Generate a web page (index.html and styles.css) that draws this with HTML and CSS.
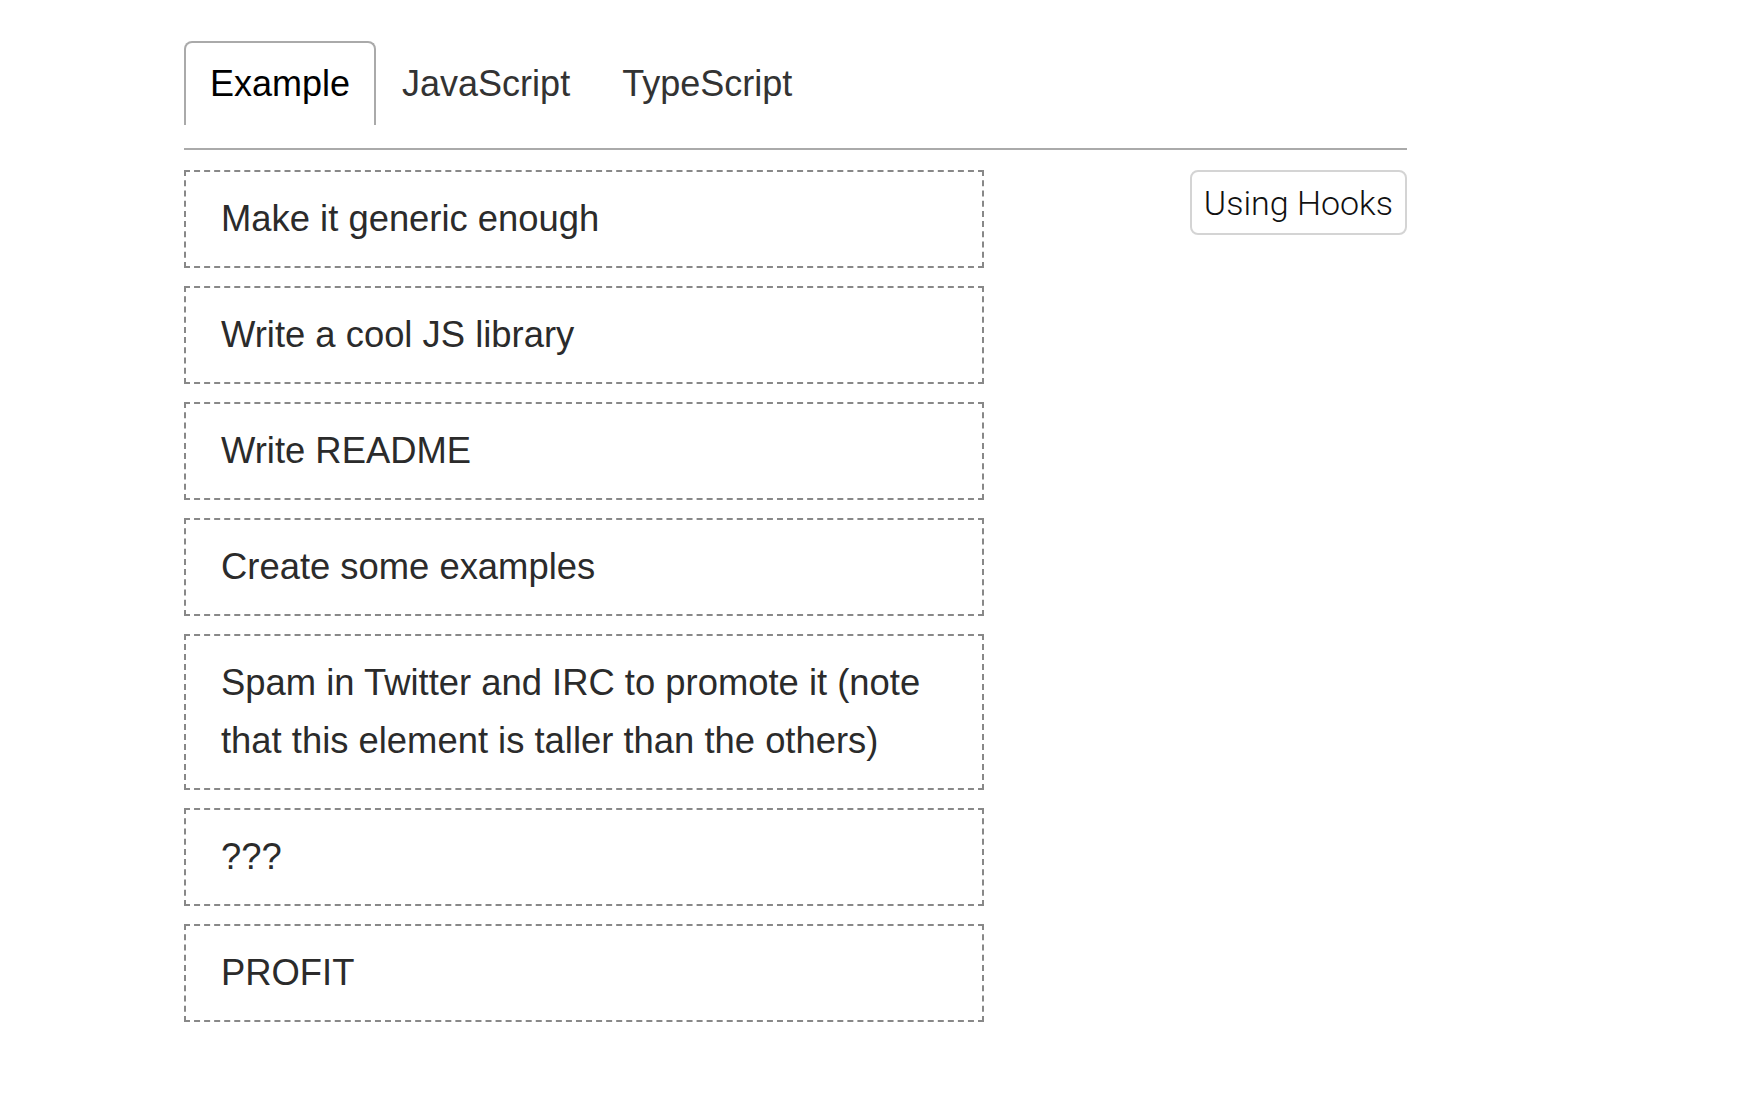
FILE: index.html
```html
<!DOCTYPE html>
<html lang="en">
<head>
    <meta charset="UTF-8">
    <meta name="viewport" content="width=device-width, initial-scale=1.0">
    <title>Sortable list</title>
    <link rel="stylesheet" href="styles.css">
</head>
<body>
    <div class="app">
        <ul class="tab-list">
            <li class="tab selected">Example</li>
            <li class="tab">JavaScript</li>
            <li class="tab">TypeScript</li>
        </ul>

        <div class="panel">
            <ul class="cards">
                <li class="card">Make it generic enough</li>
                <li class="card">Write a cool JS library</li>
                <li class="card">Write README</li>
                <li class="card">Create some examples</li>
                <li class="card">Spam in Twitter and IRC to promote it (note that this element is taller than the others)</li>
                <li class="card">???</li>
                <li class="card">PROFIT</li>
            </ul>
            <button class="hooks-btn" type="button">Using Hooks</button>
        </div>
    </div>
</body>
</html>
```

FILE: styles.css
```css
body {
    margin: 0;
    padding: 0;
    font-family: "Liberation Sans", Arial, sans-serif;
    background-color: #fff;
    color: #333;
}

.app {
    width: 1223px;
    padding: 41px 0 0 184px;
}

.tab-list {
    display: flex;
    list-style: none;
    margin: 0 0 20px;
    padding: 0 0 23px;
    border-bottom: 2px solid #aaa;
}

.tab {
    padding: 12px 24px;
    font-size: 36px;
    line-height: 58px;
    border: 2px solid transparent;
    border-bottom: none;
    border-radius: 8px 8px 0 0;
    color: #333;
    cursor: pointer;
}

.tab.selected {
    color: #000;
    border-color: #aaa;
}

.panel {
    display: flex;
    align-items: flex-start;
}

.cards {
    list-style: none;
    margin: 0;
    padding: 0;
    width: 800px;
}

.card {
    border: 2px dashed #888;
    padding: 18px 35px;
    margin-bottom: 18px;
    font-size: 36.4px;
    line-height: 58px;
    color: #2b2b2b;
}

.hooks-btn {
    margin-left: auto;
    height: 65px;
    padding: 0 12px;
    background-color: #fff;
    border: 2px solid #d4d4d4;
    border-radius: 8px;
    font-family: Roboto, "Liberation Sans", Arial, sans-serif;
    font-weight: 300;
    font-size: 34px;
    color: #111;
    cursor: pointer;
}
```
